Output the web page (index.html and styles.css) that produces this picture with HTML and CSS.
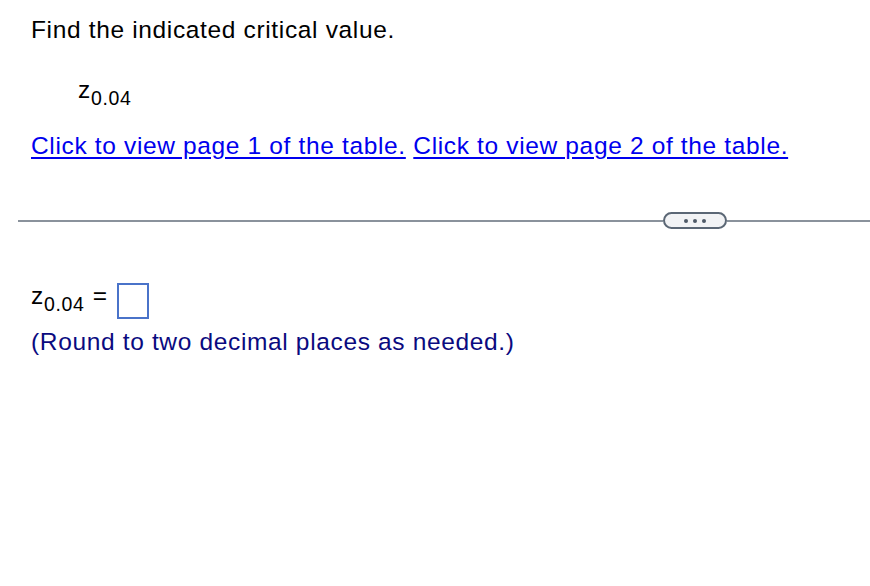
FILE: index.html
```html
<!DOCTYPE html>
<html>
<head>
<meta charset="utf-8">
<link rel="stylesheet" href="styles.css">
</head>
<body>
<div class="question">
  <p class="prompt">Find the indicated critical value.</p>
  <p class="expr">z<sub>0.04</sub></p>
  <p class="links"><a href="#">Click to view page 1 of the table.</a> <a href="#">Click to view page 2 of the table.</a></p>
</div>
<div class="divider">
  <span class="line"></span>
  <span class="pill"><i></i><i></i><i></i></span>
  <span class="line tail"></span>
</div>
<div class="answer">
  <div class="eq"><span class="var">z<sub>0.04</sub></span><span class="equals">=</span><span class="box"></span></div>
  <p class="note">(Round to two decimal places as needed.)</p>
</div>
</body>
</html>
```
FILE: styles.css
```css
html, body {
  margin: 0;
  padding: 0;
  background: #fff;
}
body {
  font-family: "Liberation Sans", Arial, sans-serif;
  font-size: 24.5px;
  letter-spacing: 0.65px;
  color: #000;
  width: 870px;
  height: 586px;
}
p { margin: 0; }
.question {
  padding: 17px 0 0 31px;
}
.prompt,
.expr,
.links,
.var,
.equals,
.note {
  line-height: 26px;
}
.expr {
  margin-top: 34px;
  padding-left: 47px;
}
sub {
  font-size: 19.5px;
  letter-spacing: 0.7px;
  vertical-align: -7px;
  line-height: 0;
}
.links {
  margin-top: 30px;
}
.links a {
  color: #0000ee;
  text-decoration: underline;
  text-underline-offset: 3px;
}
.divider {
  display: flex;
  align-items: center;
  margin: 53px 0 0 18px;
}
.line {
  height: 2px;
  background: #8a929c;
  width: 645px;
}
.line.tail {
  flex: 1;
  width: auto;
}
.pill {
  display: flex;
  align-items: center;
  justify-content: center;
  gap: 5px;
  width: 64px;
  height: 17px;
  box-sizing: border-box;
  border: 2px solid #5b6775;
  border-radius: 9px;
  background: #f2f3f5;
}
.pill i {
  width: 4px;
  height: 4px;
  border-radius: 50%;
  background: #4f5a67;
}
.answer {
  padding: 54px 0 0 31px;
}
.eq {
  display: flex;
  align-items: flex-start;
  height: 36px;
}
.equals {
  margin: 0 9px 0 8px;
}
.box {
  width: 32px;
  height: 36px;
  border: 2px solid #4a73c9;
  box-sizing: border-box;
}
.note {
  color: #0a0a80;
  margin-top: 10px;
}
```
